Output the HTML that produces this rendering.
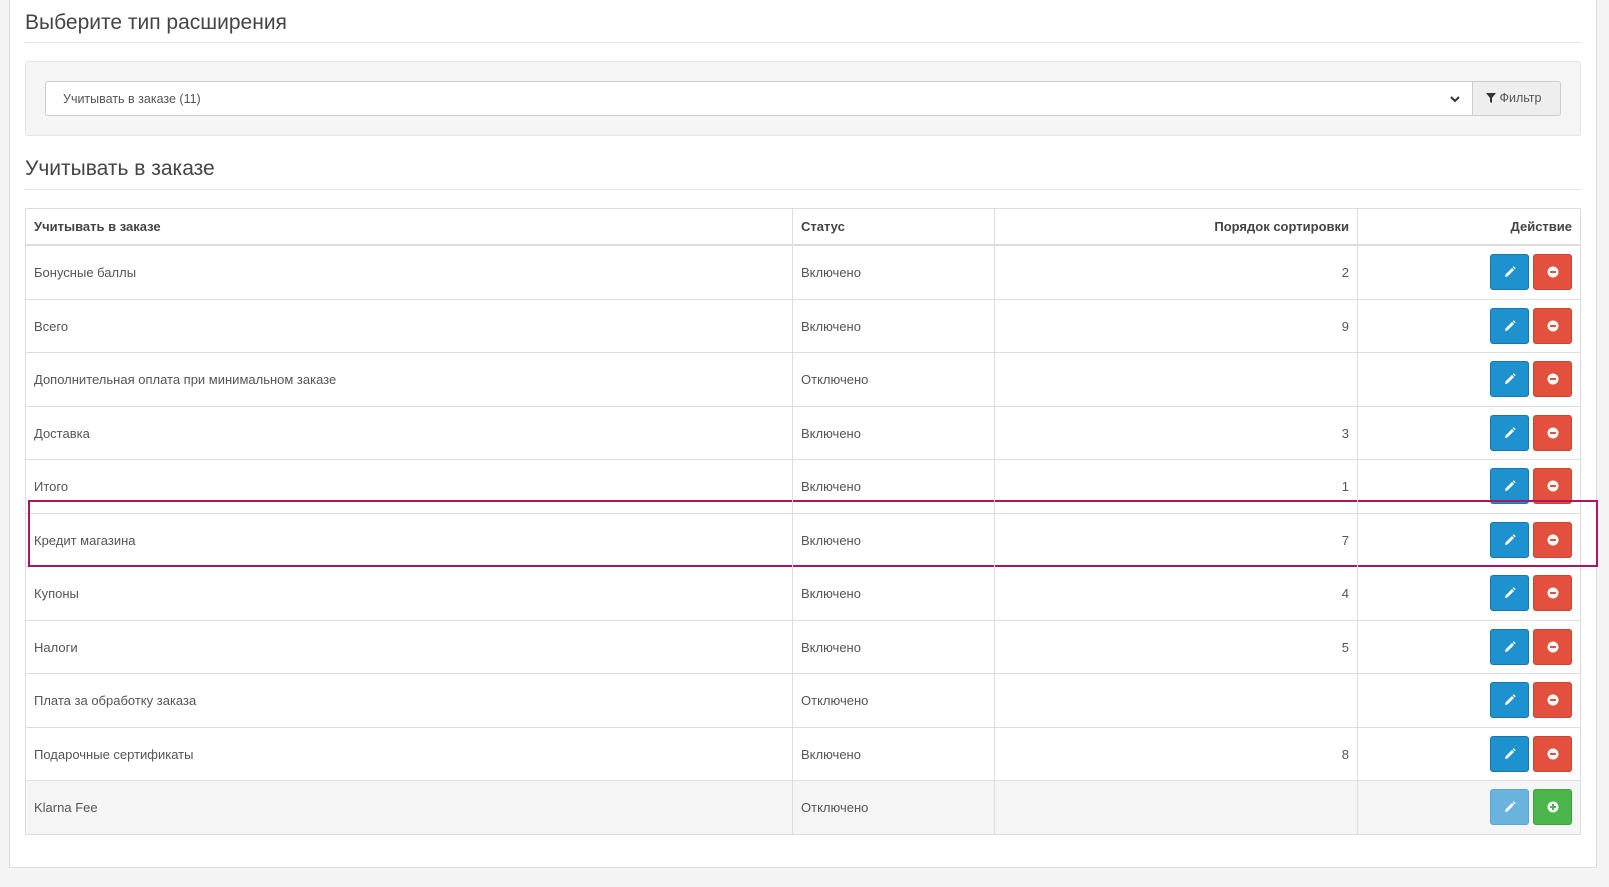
<!DOCTYPE html>
<html><head><meta charset="utf-8"><style>
*{box-sizing:border-box;margin:0;padding:0}
body{width:1609px;height:887px;background:#f4f4f4;font-family:"Liberation Sans","DejaVu Sans",sans-serif;color:#555;position:relative;overflow:hidden}
.card{position:absolute;left:9px;top:-2px;width:1588px;height:870px;background:#fff;border:1px solid #ddd}
.h{position:absolute;left:25px;font-size:21px;color:#444}
.hr{position:absolute;left:25px;width:1556px;height:1px;background:#e5e5e5}
.well{position:absolute;left:25px;top:61px;width:1556px;height:75px;background:#f5f5f5;border:1px solid #e3e3e3;border-radius:3px}
.sel{position:absolute;left:45px;top:81px;width:1428px;height:35px;background:#fff;border:1px solid #ccc;border-radius:3px 0 0 3px;font-size:12.5px;padding:10px 17px;color:#555}
.btnf{position:absolute;left:1472px;top:81px;width:89px;height:35px;background:#eee;border:1px solid #ccc;border-radius:0 3px 3px 0;font-size:12.5px;padding:9px 0 0 13px;color:#555}
.tbl{position:absolute;left:25px;top:208px;width:1556px;height:627px;border:1px solid #ddd}
.row{position:absolute;left:0;width:1554px;border-top:1px solid #ddd;font-size:13px}
.c{position:absolute;top:0;height:100%;display:flex;align-items:center}
.v{position:absolute;top:0;width:1px;background:#ddd;height:627px;z-index:2}
.b{position:absolute;width:39px;height:36px;border-radius:3px;display:flex;align-items:center;justify-content:center}
.bl{background:#1e91cf;border:1px solid #1978ab}.rd{background:#e3503e;border:1px solid #c74535}.gr{background:#4cb64c;border:1px solid #3f9f3f}.lb{background:#6ab3dc;border:1px solid #5ea5cc}
.hl{position:absolute;left:28px;top:500px;width:1570px;height:67px;border:2px solid #b0155f}
</style></head><body>
<div class="card"></div>
<div class="h" style="top:11px">Выберите тип расширения</div>
<div class="hr" style="top:42px"></div>
<div class="well"></div>
<div class="sel">Учитывать в заказе (11)<svg style="position:absolute;right:12px;top:13px" width="10" height="8" viewBox="0 0 10 8"><path d="M1 2l4 4 4-4" fill="none" stroke="#333" stroke-width="2"/></svg></div>
<div class="btnf"><svg width="10" height="10" viewBox="0 0 10 10" style="vertical-align:-1px"><path d="M0 0h10L6 5v5L4 9V5z" fill="#333"/></svg> Фильтр</div>
<div class="h" style="top:157px">Учитывать в заказе</div>
<div class="hr" style="top:189px"></div>
<div class="tbl">
<div class="row" style="top:0;height:37px;border-top:none;border-bottom:2px solid #ddd;font-weight:bold;color:#444">
<div class="c" style="left:8px">Учитывать в заказе</div><div class="c" style="left:775px">Статус</div>
<div class="c" style="left:969px;width:354px;justify-content:flex-end">Порядок сортировки</div>
<div class="c" style="left:1332px;width:214px;justify-content:flex-end">Действие</div></div>
</div>
<div id="rows"></div>
<div class="v" style="left:792px;top:208px"></div><div class="v" style="left:994px;top:208px"></div><div class="v" style="left:1357px;top:208px"></div>
<div class="hl"></div>
<script>
var d=[["Бонусные баллы","Включено","2"],["Всего","Включено","9"],["Дополнительная оплата при минимальном заказе","Отключено",""],["Доставка","Включено","3"],["Итого","Включено","1"],["Кредит магазина","Включено","7"],["Купоны","Включено","4"],["Налоги","Включено","5"],["Плата за обработку заказа","Отключено",""],["Подарочные сертификаты","Включено","8"],["Klarna Fee","Отключено",""]];
var pen='<svg width="12" height="12" viewBox="0 0 12 12"><path d="M1 11l.6-2.6L8 2l2 2-6.4 6.4z M8.7 1.3l1-1 2 2-1 1z" fill="#fff"/></svg>';
var minus='<svg width="12" height="12" viewBox="0 0 12 12"><circle cx="6" cy="6" r="5.5" fill="#fff"/><rect x="3" y="5" width="6" height="2" fill="#e3503e"/></svg>';
var plus='<svg width="12" height="12" viewBox="0 0 12 12"><circle cx="6" cy="6" r="5.5" fill="#fff"/><rect x="3" y="5" width="6" height="2" fill="#4cb64c"/><rect x="5" y="3" width="2" height="6" fill="#4cb64c"/></svg>';
var h='';
for(var i=0;i<11;i++){var t=245+53.5*i;var last=i==10;
h+='<div class="row" style="left:26px;top:'+t+'px;height:53.5px;'+(last?'background:#f5f5f5;':'')+'"><div class="c" style="left:8px;height:53.5px">'+d[i][0]+'</div><div class="c" style="left:775px;height:53.5px">'+d[i][1]+'</div><div class="c" style="left:969px;width:354px;justify-content:flex-end;height:53.5px">'+d[i][2]+'</div></div>';
var bt=t+9;
h+='<div class="b '+(last?'lb':'bl')+'" style="left:1490px;top:'+bt+'px">'+pen+'</div><div class="b '+(last?'gr':'rd')+'" style="left:1533px;top:'+bt+'px">'+(last?plus:minus)+'</div>';}
document.getElementById('rows').innerHTML=h;
</script>
</body></html>
